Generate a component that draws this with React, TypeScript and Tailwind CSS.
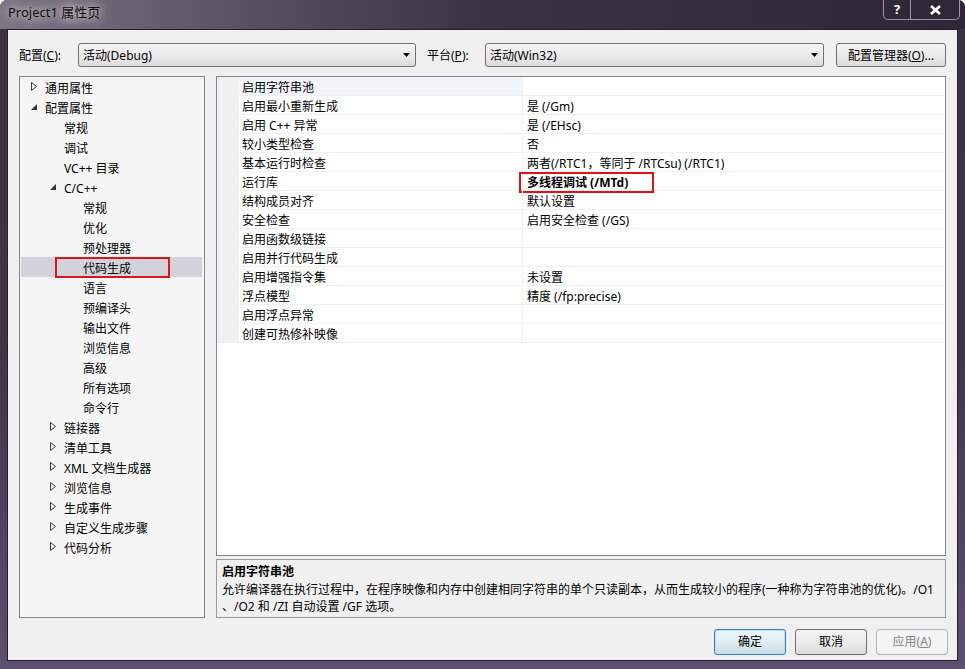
import React from "react";

type TreeItem = {
  label: string;
  level: 0 | 1 | 2;
  arrow?: "open" | "closed";
  selected?: boolean;
};

const TREE: TreeItem[] = [
  { label: "通用属性", level: 0, arrow: "closed" },
  { label: "配置属性", level: 0, arrow: "open" },
  { label: "常规", level: 1 },
  { label: "调试", level: 1 },
  { label: "VC++ 目录", level: 1 },
  { label: "C/C++", level: 1, arrow: "open" },
  { label: "常规", level: 2 },
  { label: "优化", level: 2 },
  { label: "预处理器", level: 2 },
  { label: "代码生成", level: 2, selected: true },
  { label: "语言", level: 2 },
  { label: "预编译头", level: 2 },
  { label: "输出文件", level: 2 },
  { label: "浏览信息", level: 2 },
  { label: "高级", level: 2 },
  { label: "所有选项", level: 2 },
  { label: "命令行", level: 2 },
  { label: "链接器", level: 1, arrow: "closed" },
  { label: "清单工具", level: 1, arrow: "closed" },
  { label: "XML 文档生成器", level: 1, arrow: "closed" },
  { label: "浏览信息", level: 1, arrow: "closed" },
  { label: "生成事件", level: 1, arrow: "closed" },
  { label: "自定义生成步骤", level: 1, arrow: "closed" },
  { label: "代码分析", level: 1, arrow: "closed" },
];

const INDENT = ["pl-[11px]", "pl-[30px]", "pl-[49px]"];

const PROPS: { name: string; value: string; bold?: boolean }[] = [
  { name: "启用字符串池", value: "" },
  { name: "启用最小重新生成", value: "是 (/Gm)" },
  { name: "启用 C++ 异常", value: "是 (/EHsc)" },
  { name: "较小类型检查", value: "否" },
  { name: "基本运行时检查", value: "两者(/RTC1，等同于 /RTCsu) (/RTC1)" },
  { name: "运行库", value: "多线程调试 (/MTd)", bold: true },
  { name: "结构成员对齐", value: "默认设置" },
  { name: "安全检查", value: "启用安全检查 (/GS)" },
  { name: "启用函数级链接", value: "" },
  { name: "启用并行代码生成", value: "" },
  { name: "启用增强指令集", value: "未设置" },
  { name: "浮点模型", value: "精度 (/fp:precise)" },
  { name: "启用浮点异常", value: "" },
  { name: "创建可热修补映像", value: "" },
];

const Arrow = ({ kind }: { kind?: "open" | "closed" }) => {
  if (kind === "closed")
    return (
      <svg width="6" height="9" viewBox="0 0 6 9" className="shrink-0 mt-[2px]">
        <polygon points="0.5,0.5 5.5,4.5 0.5,8.5" fill="none" stroke="#3c3c3c" strokeWidth="1" />
      </svg>
    );
  if (kind === "open")
    return (
      <svg width="6" height="6" viewBox="0 0 6 6" className="shrink-0 mt-[4px]">
        <polygon points="6,0 6,6 0,6" fill="#333" />
      </svg>
    );
  return null;
};

const Combo = ({ text, width }: { text: string; width: string }) => (
  <div
    className={`${width} h-[24px] flex items-center justify-between rounded-[3px] border border-[#707070] bg-gradient-to-b from-[#f4f4f4] via-[#ebebeb] to-[#dcdcdc] pl-[4px] pr-[5px]`}
  >
    <span className="relative top-[1px]">{text}</span>
    <svg width="7" height="4" viewBox="0 0 7 4">
      <polygon points="0,0 7,0 3.5,4" fill="#000" />
    </svg>
  </div>
);

export default function App() {
  return (
    <div className="w-[965px] h-[669px] bg-white font-['Noto_Sans','Noto_Sans_CJK_SC',sans-serif] text-[12px] text-black">
      <div className="w-full h-full flex flex-col rounded-t-[7px] bg-gradient-to-b from-[#3a3141] via-[#3d3446] to-[#5c5070]">
        {/* Title bar */}
        <div className="h-[29px] shrink-0 flex items-start rounded-t-[7px] bg-gradient-to-r from-[#7b7484] via-[#3b3244] to-[#2f2737]">
          <div className="pl-[8px] pt-[3px] leading-[18px] text-[13px] text-[#101010] [text-shadow:0_0_8px_rgba(255,255,255,0.9),0_0_14px_rgba(255,255,255,0.6)]">
            Project1 属性页
          </div>
          <div className="ml-auto mr-[5px] flex h-[20px] rounded-b-[5px] border border-t-0 border-[#9d94a6] overflow-hidden">
            <div className="w-[27px] flex items-center justify-center border-r border-[#9d94a6] text-white font-bold text-[13px]">
              ?
            </div>
            <div className="w-[48px] flex items-center justify-center text-white">
              <svg width="11" height="10" viewBox="0 0 11 10">
                <path d="M1 1 L10 9 M10 1 L1 9" stroke="#fff" strokeWidth="2.6" />
              </svg>
            </div>
          </div>
        </div>

        {/* Client area */}
        <div className="mx-[7px] mb-[8px] flex-1 flex flex-col border border-[#251e2c] bg-[#f0f0f0] px-[11px] pt-[13px]">
          {/* Configuration row */}
          <div className="h-[24px] flex items-center">
            <span className="w-[59px] relative top-[1px]">
              配置(<span className="underline">C</span>):
            </span>
            <Combo text="活动(Debug)" width="w-[338px]" />
            <span className="ml-[11px] w-[58px] relative top-[1px]">
              平台(<span className="underline">P</span>):
            </span>
            <Combo text="活动(Win32)" width="w-[339px]" />
            <button className="ml-auto w-[110px] h-[24px] rounded-[3px] border border-[#707070] bg-gradient-to-b from-[#f4f4f4] via-[#ebebeb] to-[#dcdcdc]">
              <span className="relative top-[1px]">
                配置管理器(<span className="underline">O</span>)...
              </span>
            </button>
          </div>

          {/* Main */}
          <div className="mt-[9px] h-[542px] flex gap-[11px]">
            {/* Tree */}
            <div className="w-[186px] h-full border border-[#828790] bg-[#f5f5f5]">
              {TREE.map((t, i) => (
                <div
                  key={i}
                  className={`relative h-[20px] flex items-start ${INDENT[t.level]} ${
                    t.selected ? "bg-[#d2d3db] ml-[1px] mr-[2px]" : ""
                  }`}
                >
                  <span className="w-[14px] h-[20px] flex items-start pt-[3px]">
                    <Arrow kind={t.arrow} />
                  </span>
                  <span className={`relative top-[2px] leading-[20px] whitespace-nowrap ${t.selected ? "-ml-[1px]" : ""}`}>
                    {t.label}
                  </span>
                  {t.selected && (
                    <div className="absolute left-[34px] top-0 w-[115px] h-[21px] border-2 border-[#e0121a]" />
                  )}
                </div>
              ))}
            </div>

            {/* Right column */}
            <div className="flex-1 flex flex-col">
              <div className="h-[480px] border border-[#828790] bg-white">
                {PROPS.map((p, i) => (
                  <div key={i} className="h-[19px] flex">
                    <div className="w-[22px] bg-[#f0f0f0]" />
                    <div
                      className={`w-[283px] pl-[3px] border-b border-[#f0f0f0] whitespace-nowrap ${
                        i === 0 ? "bg-[#f2f5fa]" : ""
                      }`}
                    >
                      <span className="relative top-[2px] leading-[18px]">{p.name}</span>
                    </div>
                    <div className="relative flex-1 pl-[4px] border-b border-l border-[#f0f0f0] whitespace-nowrap">
                      <span className={`relative top-[2px] leading-[18px] ${p.bold ? "font-bold" : ""}`}>{p.value}</span>
                      {p.bold && (
                        <div className="absolute -left-[4px] top-0 w-[135px] h-[21px] border-2 border-[#e0121a]" />
                      )}
                    </div>
                  </div>
                ))}
              </div>
              <div className="mt-[3px] h-[59px] border border-[#9a9a9a] bg-[#f0f0f0] pl-[5px] pt-[3px]">
                <div className="font-bold leading-[18px]">启用字符串池</div>
                <div className="leading-[17px] whitespace-nowrap">
                  允许编译器在执行过程中，在程序映像和内存中创建相同字符串的单个只读副本，从而生成较小的程序(一种称为字符串池的优化)。/O1
                </div>
                <div className="leading-[17px] whitespace-nowrap">、/O2 和 /ZI 自动设置 /GF 选项。</div>
              </div>
            </div>
          </div>

          {/* Buttons */}
          <div className="mt-[11px] h-[26px] flex justify-end gap-[9px] -mr-[2px]">
            <button className="w-[72px] h-[26px] rounded-[3px] border border-[#3c7fb1] bg-gradient-to-b from-[#eef6fb] via-[#e0ecf4] to-[#c9dbe8] shadow-[inset_0_0_0_1px_#b6e0f8]">
              确定
            </button>
            <button className="w-[72px] h-[26px] rounded-[3px] border border-[#707070] bg-gradient-to-b from-[#f4f4f4] via-[#ebebeb] to-[#dcdcdc]">
              取消
            </button>
            <button className="w-[72px] h-[26px] rounded-[3px] border border-[#adb2b5] bg-[#f4f4f4] text-[#838383]">
              应用(<span className="underline">A</span>)
            </button>
          </div>
        </div>
      </div>
    </div>
  );
}
